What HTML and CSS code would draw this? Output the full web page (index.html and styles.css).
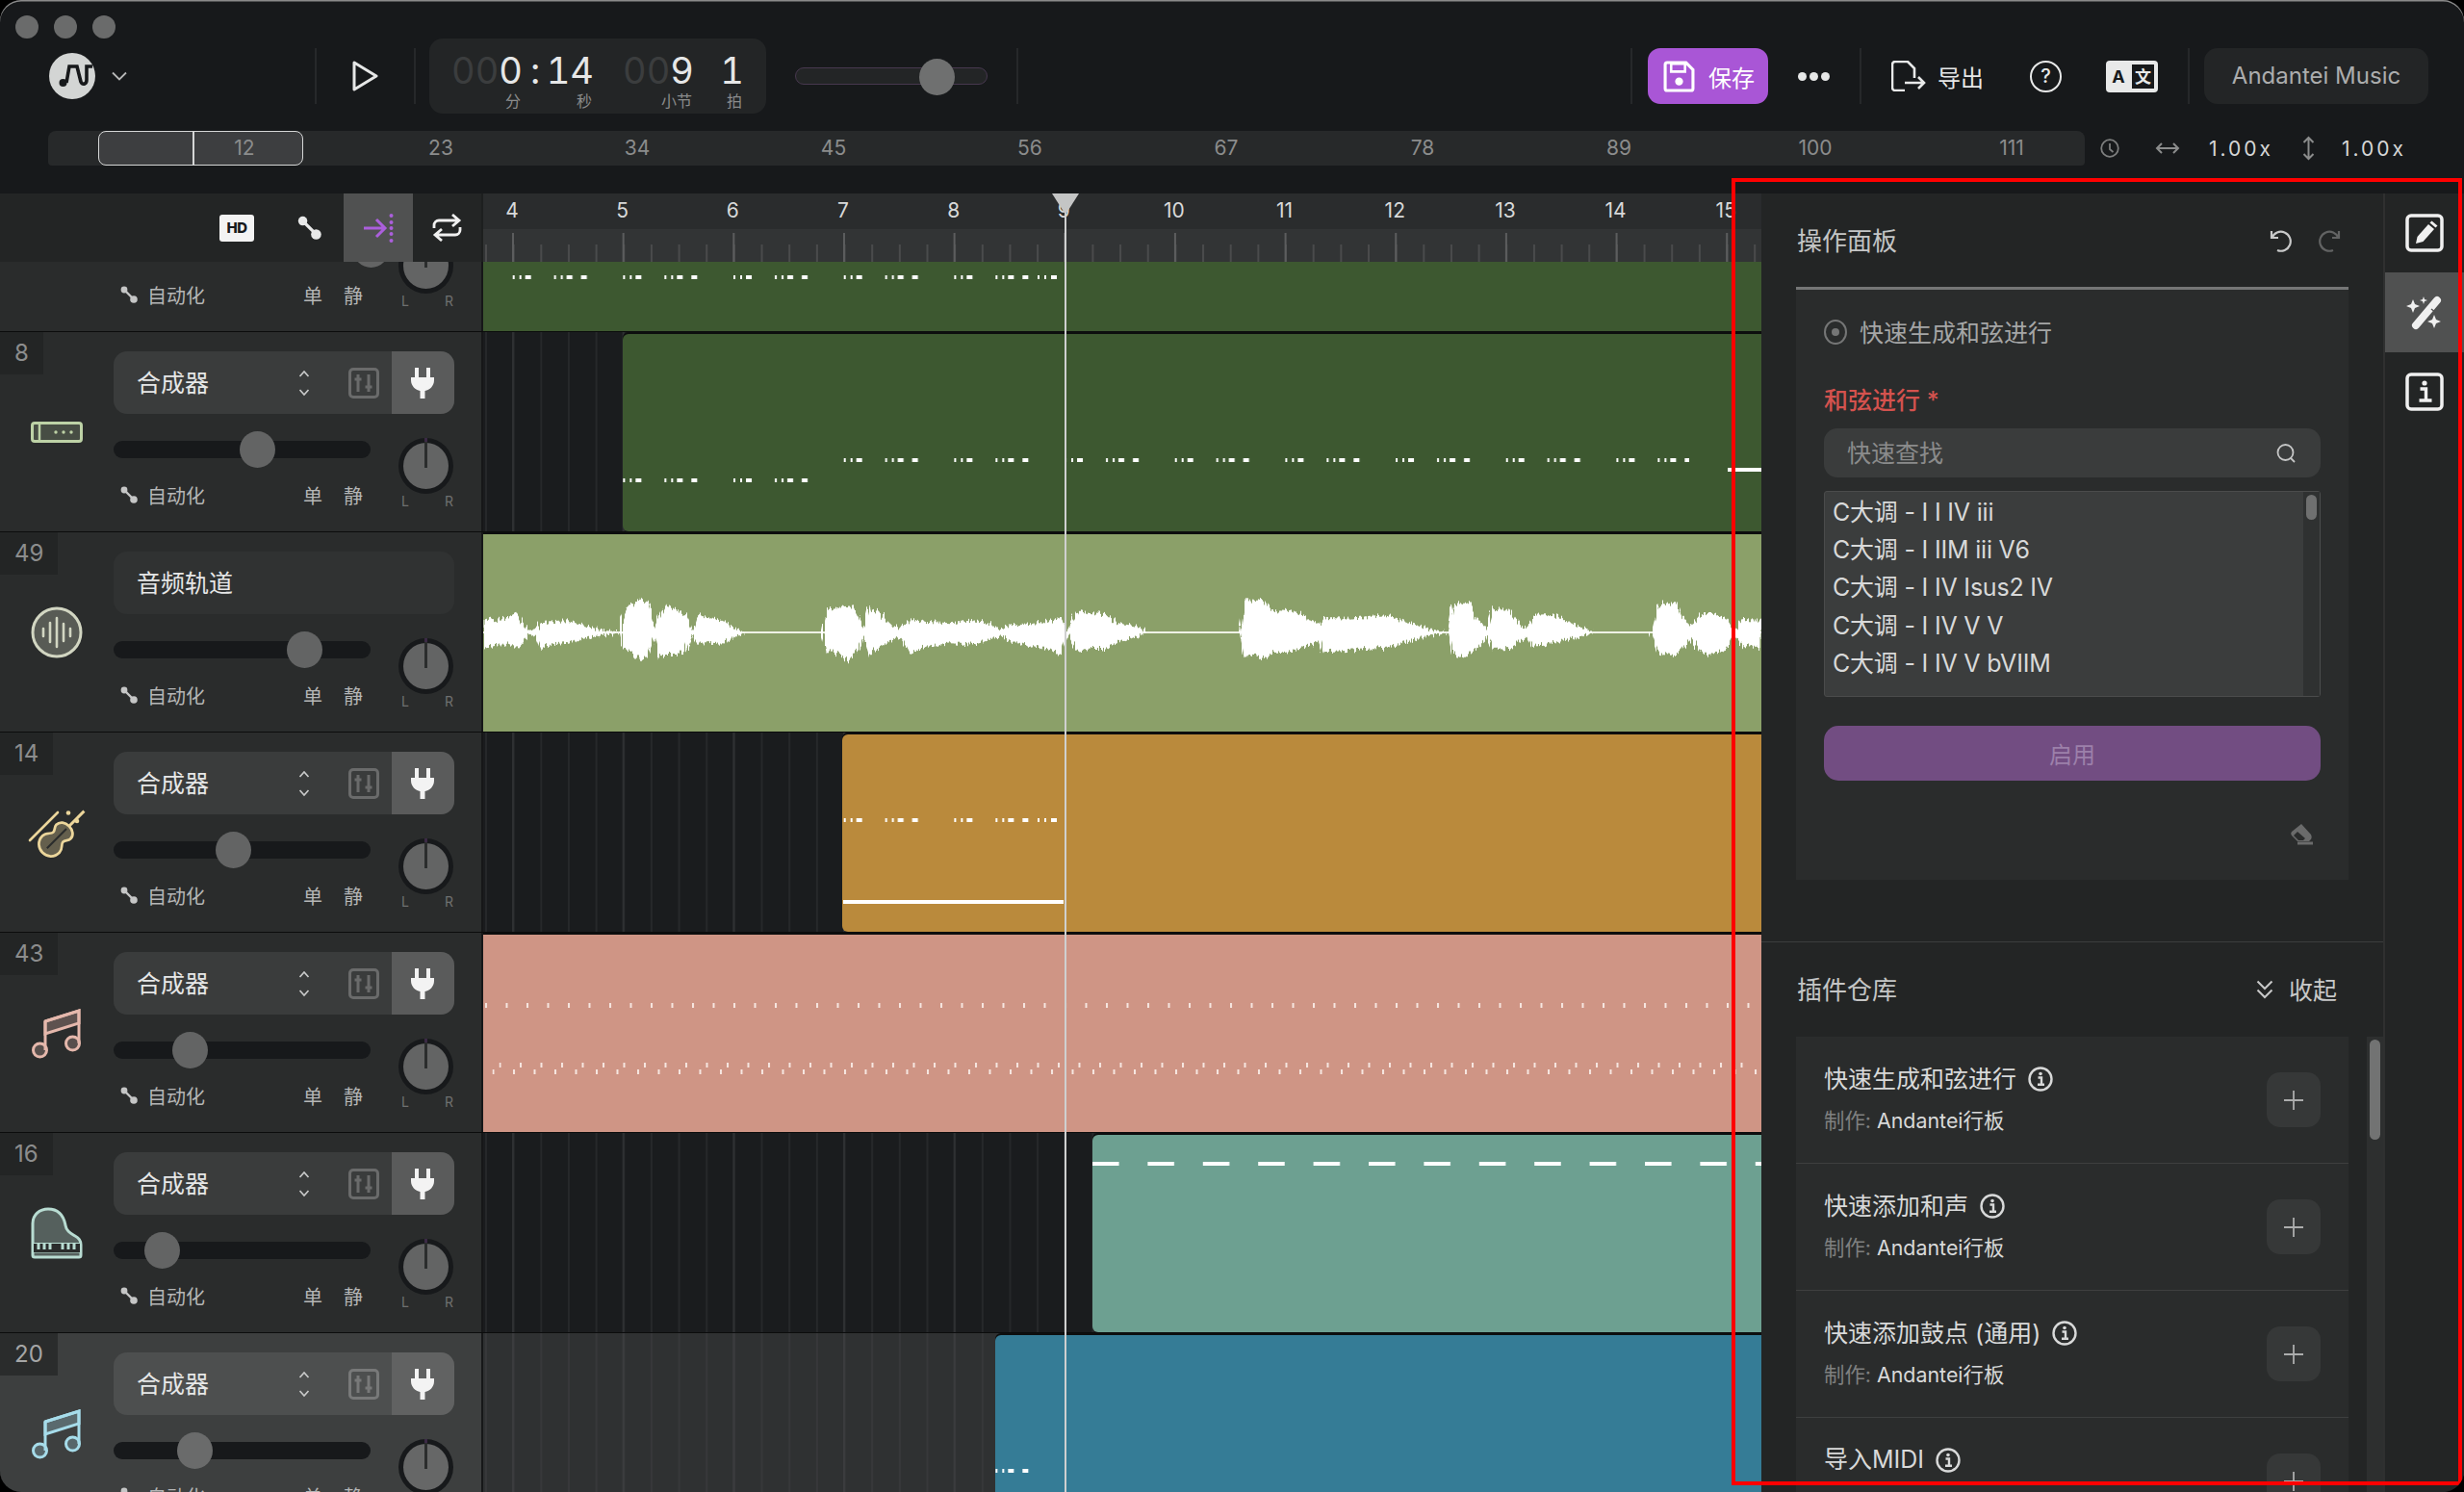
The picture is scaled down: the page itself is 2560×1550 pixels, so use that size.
FILE: index.html
```html
<!DOCTYPE html>
<html lang="zh">
<head>
<meta charset="utf-8">
<title>Andantei Music</title>
<link rel="stylesheet" href="styles.css">
</head>
<body>
<svg class="defs" width="0" height="0" aria-hidden="true">
  <defs>
    <filter id="jag" x="-2%" y="-10%" width="104%" height="120%">
      <feTurbulence type="fractalNoise" baseFrequency="0.45 0.015" numOctaves="2" seed="4" result="n"/>
      <feDisplacementMap in="SourceGraphic" in2="n" scale="12" xChannelSelector="A" yChannelSelector="R"/>
    </filter>
    <pattern id="bar" patternUnits="userSpaceOnUse" width="114.67" height="4" patternTransform="translate(30.7 0)">
      <rect x="0" width="2" height="4" fill="#fff"/><rect x="7" width="2" height="4" fill="#fff"/><rect x="13" width="6" height="4" fill="#fff"/>
      <rect x="43" width="2" height="4" fill="#fff"/><rect x="50" width="2" height="4" fill="#fff"/><rect x="56" width="6" height="4" fill="#fff"/><rect x="71" width="6" height="4" fill="#fff"/>
    </pattern>
    <pattern id="tick" patternUnits="userSpaceOnUse" width="21.5" height="5"><rect width="2" height="5" fill="#f6e6e0"/></pattern>
    <pattern id="dash" patternUnits="userSpaceOnUse" width="57.4" height="4"><rect width="27.5" height="4" fill="#fff"/></pattern>
    <symbol id="auto" viewBox="0 0 18 18"><path d="M4 4 14 14" stroke="currentColor" stroke-width="2.4"/><circle cx="4" cy="4" r="3.4" fill="currentColor"/><circle cx="14" cy="14" r="3.8" fill="currentColor"/></symbol>
    <symbol id="updown" viewBox="0 0 12 28"><path d="M1.5 7 6 2l4.500 5M1.500 21 6 26l4.500-5" fill="none" stroke="currentColor" stroke-width="1.700"/></symbol>
    <symbol id="mixer" viewBox="0 0 32 32"><rect x="1.500" y="1.500" width="29" height="29" rx="3.500" fill="none" stroke="currentColor" stroke-width="3"/><path d="M10 7v18M6.500 12h7M21 7v18M17.500 20h7" stroke="currentColor" stroke-width="3" fill="none"/></symbol>
    <symbol id="plug" viewBox="0 0 24 32"><path d="M4 0h4v10H4zM16 0h4v10h-4zM0 10h24v3c0 6-4.500 10-9.500 11v8h-5v-8C4.500 23 0 19 0 13z" fill="currentColor"/></symbol>
    <symbol id="note" viewBox="0 0 54 54"><path d="M15 15 50 4v34" fill="none" stroke="currentColor" stroke-width="3"/><path d="M15 15 50 4v13L15 28z" fill="currentColor" fill-opacity=".28" stroke="currentColor" stroke-width="3"/><path d="M15 15v30" stroke="currentColor" stroke-width="3"/><circle cx="9.500" cy="45" r="7" fill="currentColor" fill-opacity=".25" stroke="currentColor" stroke-width="3"/><circle cx="43.500" cy="38" r="7" fill="currentColor" fill-opacity=".25" stroke="currentColor" stroke-width="3"/></symbol>
    <symbol id="iinfo" viewBox="0 0 26 26"><circle cx="13" cy="13" r="11.500" fill="none" stroke="currentColor" stroke-width="2.400"/><circle cx="13" cy="7.500" r="1.800" fill="currentColor"/><path d="M10.500 11.500H14v7M10 18.800h7" fill="none" stroke="currentColor" stroke-width="2.400"/></symbol>
    <symbol id="plus" viewBox="0 0 20 20"><path d="M10 0v20M0 10h20" stroke="currentColor" stroke-width="1.800"/></symbol>
  </defs>
</svg>

<div class="window">
  <div class="titlebar"><i class="light"></i><i class="light"></i><i class="light"></i></div>

  <header class="toolbar">
    <svg class="logo" viewBox="0 0 48 48"><circle cx="24" cy="24" r="24" fill="#d3d5d4"/><path d="M18 31 21 14H29L33 30Q34.500 33 37 32Q39 31 39 28V14H45" fill="none" stroke="#17191b" stroke-width="3.600"/><circle cx="14.500" cy="31" r="4" fill="#17191b"/></svg>
    <svg class="chev" viewBox="0 0 16 10"><path d="M1 1.500 8 8.500 15 1.500" fill="none" stroke="#b5b6b6" stroke-width="1.800"/></svg>
    <i class="vr vr-a"></i>
    <svg class="play" viewBox="0 0 27 32"><path d="M2 2 25 16 2 30z" fill="none" stroke="#e6e7e7" stroke-width="3" stroke-linejoin="round"/></svg>
    <i class="vr vr-b"></i>
    <div class="timebox">
      <div class="tcol t-min"><div class="digits"><span class="dim">00</span>0</div><small>分</small></div>
      <div class="digits colon">:</div>
      <div class="tcol t-sec"><div class="digits">14</div><small>秒</small></div>
      <div class="tcol t-bar"><div class="digits"><span class="dim">00</span>9</div><small>小节</small></div>
      <div class="tcol t-beat"><div class="digits">1</div><small>拍</small></div>
    </div>
    <div class="master"><i class="master-thumb"></i></div>
    <i class="vr vr-c"></i>
    <i class="vr vr-d"></i>
    <button class="save">
      <svg class="save-ico" viewBox="0 0 32 32"><path d="M4 2h19l7 7v19a2 2 0 0 1-2 2H4a2 2 0 0 1-2-2V4a2 2 0 0 1 2-2z" fill="none" stroke="#fff" stroke-width="3"/><path d="M8 3h14v8H8z" fill="none" stroke="#fff" stroke-width="2.500"/><circle cx="16" cy="21" r="4" fill="#fff"/></svg>
      保存
    </button>
    <div class="dots"><i></i><i></i><i></i></div>
    <i class="vr vr-e"></i>
    <svg class="export-ico" viewBox="0 0 36 32"><path d="M14 31H4a3 3 0 0 1-3-3V4a3 3 0 0 1 3-3h13l7 7v10" fill="none" stroke="#e8e9e9" stroke-width="2.600"/><path d="M14 23h20M28 17l6 6-6 6" fill="none" stroke="#e8e9e9" stroke-width="2.600"/></svg>
    <span class="export-txt">导出</span>
    <span class="help">?</span>
    <svg class="translate" viewBox="0 0 54 33"><rect width="54" height="33" rx="4" fill="#e8e9e9"/><rect x="27" y="4" width="23" height="25" fill="#17191b"/><text x="13" y="23" class="tr-a">A</text><text x="38.500" y="23" class="tr-b">文</text></svg>
    <i class="vr vr-f"></i>
    <div class="account">Andantei Music</div>
  </header>

  <div class="overview-row">
    <div class="overview">
      <div class="viewport"><i></i></div>
      <div class="overview-labels"><span>12</span><span>23</span><span>34</span><span>45</span><span>56</span><span>67</span><span>78</span><span>89</span><span>100</span><span>111</span></div>
    </div>
    <svg class="ov-clock" viewBox="0 0 20 20"><circle cx="10" cy="10" r="8.800" fill="none" stroke="#7d7e7e" stroke-width="1.800"/><path d="M10 5v6l3.500 3" fill="none" stroke="#7d7e7e" stroke-width="1.800"/></svg>
    <svg class="ov-h" viewBox="0 0 26 14"><path d="M2 7h22M7 2 2 7l5 5M19 2l5 5-5 5" fill="none" stroke="#8b8c8c" stroke-width="2"/></svg>
    <span class="zoomval zv-a">1.00x</span>
    <svg class="ov-v" viewBox="0 0 13 26"><path d="M6.500 2v22M1.500 7l5-5 5 5M1.500 19l5 5 5-5" fill="none" stroke="#8b8c8c" stroke-width="2"/></svg>
    <span class="zoomval zv-b">1.00x</span>
  </div>

  <main class="main">
    <section class="arrange">
      <div class="arrange-head">
        <div class="tools">
          <div class="tool"><span class="hd">HD</span></div>
          <div class="tool"><svg class="ti-auto"><use href="#auto"/></svg></div>
          <div class="tool active"><svg class="ti-snap" viewBox="0 0 31 30"><path d="M0 15h21M13 6l9 9-9 9" fill="none" stroke="#ab5fdc" stroke-width="3"/><circle cx="28.500" cy="2" r="2" fill="#ab5fdc"/><circle cx="28.500" cy="9" r="2" fill="#ab5fdc"/><circle cx="28.500" cy="15" r="2" fill="#ab5fdc"/><circle cx="28.500" cy="21" r="2" fill="#ab5fdc"/><circle cx="28.500" cy="28" r="2" fill="#ab5fdc"/></svg></div>
          <div class="tool"><svg class="ti-loop" viewBox="0 0 31 29"><path d="M2 15V12a5 5 0 0 1 5-5h20M21 1l7 6-7 6M29 14v3a5 5 0 0 1-5 5H4M10 16l-7 6 7 6" fill="none" stroke="#f0f0f0" stroke-width="2.800"/></svg></div>
        </div>
        <div class="ruler">
          <div class="ruler-nums"><span>4</span><span>5</span><span>6</span><span>7</span><span>8</span><span>9</span><span>10</span><span>11</span><span>12</span><span>13</span><span>14</span><span>15</span></div>
          <div class="ruler-ticks"></div>
        </div>
      </div>

      <div class="tracks">
        <article class="track">
          <div class="tpanel">
            <div class="tleft"></div>
            <div class="tright">
              <div class="tgroup"></div>
              <div class="tlower">
                <div class="tcontrols"><div class="vol"><i class="thumb" style="left:248.500px"></i></div><div class="trow"><svg class="auto-ico"><use href="#auto"/></svg><span>自动化</span><b>单</b><b>静</b></div></div>
                <div class="pan"><div class="knob"><i></i></div><div class="lr"><span>L</span><span>R</span></div></div>
              </div>
            </div>
          </div>
          <div class="lane">
            <div class="clip full c-green" style="left:0"></div>
            <svg class="notes" style="top:149px"><rect width="568" height="4" fill="url(#bar)"/><rect x="576" width="2" height="4" fill="#fff"/><rect x="583" width="2" height="4" fill="#fff"/><rect x="590" width="6" height="4" fill="#fff"/></svg>
          </div>
        </article>

        <article class="track">
          <div class="tpanel">
            <div class="tleft"><span class="tnum">8</span>
              <div class="ticon ic-flute"><svg viewBox="0 0 54 22"><rect x="1.500" y="1.500" width="51" height="19" rx="2.500" fill="currentColor" fill-opacity=".2" stroke="currentColor" stroke-width="3"/><path d="M9 2v18" stroke="currentColor" stroke-width="2.500"/><circle cx="26" cy="11" r="1.700" fill="currentColor"/><circle cx="34" cy="11" r="1.700" fill="currentColor"/><circle cx="42" cy="11" r="1.700" fill="currentColor"/></svg></div>
            </div>
            <div class="tright">
              <div class="tgroup"><span class="tname">合成器</span><svg class="tud"><use href="#updown"/></svg><svg class="tmix"><use href="#mixer"/></svg><span class="tplug"><svg><use href="#plug"/></svg></span></div>
              <div class="tlower">
                <div class="tcontrols"><div class="vol"><i class="thumb" style="left:130.500px"></i></div><div class="trow"><svg class="auto-ico"><use href="#auto"/></svg><span>自动化</span><b>单</b><b>静</b></div></div>
                <div class="pan"><div class="knob"><i></i></div><div class="lr"><span>L</span><span>R</span></div></div>
              </div>
            </div>
          </div>
          <div class="lane">
            <div class="clip c-green" style="left:145px"></div>
            <svg class="notes" style="top:152px"><rect x="145" width="228" height="4" fill="url(#bar)"/></svg>
            <svg class="notes" style="top:131px"><rect x="373" width="880" height="4" fill="url(#bar)"/></svg>
            <i class="longnote" style="left:1293px;top:141px;width:35px"></i>
          </div>
        </article>

        <article class="track">
          <div class="tpanel">
            <div class="tleft"><span class="tnum">49</span>
              <div class="ticon ic-wave"><svg viewBox="0 0 54 54"><circle cx="27" cy="27" r="25" fill="currentColor" fill-opacity=".28" stroke="currentColor" stroke-width="3"/><path d="M13 23v8M20 17v20M27 12v30M34 18v18M41 23v8" stroke="currentColor" stroke-width="2.600" stroke-linecap="round"/></svg></div>
            </div>
            <div class="tright">
              <div class="tgroup tgroup-audio"><span class="tname">音频轨道</span></div>
              <div class="tlower">
                <div class="tcontrols"><div class="vol"><i class="thumb" style="left:180px"></i></div><div class="trow"><svg class="auto-ico"><use href="#auto"/></svg><span>自动化</span><b>单</b><b>静</b></div></div>
                <div class="pan"><div class="knob"><i></i></div><div class="lr"><span>L</span><span>R</span></div></div>
              </div>
            </div>
          </div>
          <div class="lane">
            <div class="clip full c-sage" style="left:0"></div>
            <i class="wave-line"></i>
            <svg class="wave" viewBox="25.500 141 1542 420" preserveAspectRatio="none"><polygon points="25,312 32,308 40,316 50,305 60,300 66,292 72,318 80,345 88,340 95,322 110,318 130,316 145,328 170,345 190,349 194,305 200,270 208,262 216,248 224,268 232,335 238,300 245,264 258,276 270,300 278,345 284,296 300,306 318,318 330,340 342,351 435,351 441,280 455,272 472,268 478,300 485,338 491,276 505,295 520,332 530,335 540,312 560,318 590,322 610,314 632,320 650,342 660,328 680,326 700,320 722,306 730,345 742,284 760,292 775,294 790,322 815,332 826,351 938,351 944,250 956,252 968,248 976,282 1000,285 1015,298 1035,328 1040,306 1070,308 1090,304 1115,298 1140,318 1160,335 1172,345 1190,351 1196,264 1205,262 1216,258 1226,310 1236,342 1243,276 1262,278 1270,310 1284,342 1292,296 1315,294 1340,325 1366,351 1435,351 1443,270 1455,260 1466,258 1472,300 1482,332 1495,292 1510,290 1525,305 1535,345 1545,312 1568,314 1568,396 1545,394 1535,358 1525,405 1510,418 1495,420 1482,372 1472,405 1466,420 1450,418 1443,412 1435,351 1366,351 1340,370 1315,385 1292,396 1284,360 1270,392 1262,402 1243,405 1236,362 1226,395 1212,428 1196,420 1190,351 1172,358 1160,366 1140,380 1115,398 1090,402 1070,408 1040,412 1035,372 1015,400 1000,408 976,415 968,432 956,422 944,425 938,351 826,351 815,365 790,380 775,402 760,402 742,410 730,358 722,418 700,398 680,390 660,378 650,360 632,378 610,388 590,385 560,395 540,418 530,368 520,372 505,395 491,420 485,366 478,400 465,442 455,415 441,412 435,351 342,351 330,362 318,382 300,384 284,386 278,356 270,412 258,420 245,420 238,428 232,368 224,420 216,442 208,420 200,408 194,400 190,351 170,360 145,372 130,380 110,385 95,408 88,362 80,355 72,385 66,402 60,385 50,392 40,390 32,398 25,402"/></svg>
          </div>
        </article>

        <article class="track">
          <div class="tpanel">
            <div class="tleft"><span class="tnum">14</span>
              <div class="ticon ic-violin"><svg viewBox="0 0 58 47"><path d="M1 31 30 2" stroke="currentColor" stroke-width="2.600" stroke-linecap="round"/><g transform="rotate(45 28 30) translate(28 30) scale(1.300) translate(-28 -30)"><path d="M28 15c4.500 0 8 2.500 8 6.500 0 2.500-2.500 3.500-2.500 6 0 2.500 4 3.500 4 8 0 6-4.500 9.500-9.500 9.500s-9.500-3.500-9.500-9.500c0-4.500 4-5.500 4-8 0-2.500-2.500-3.500-2.500-6 0-4 3.500-6.500 8-6.500z" fill="currentColor" fill-opacity=".3" stroke="currentColor" stroke-width="2.100"/><path d="M28 15V-2" stroke="currentColor" stroke-width="2.300"/><path d="M28 18v22" stroke="#2a2c2c" stroke-width="1.600"/></g><circle cx="41" cy="2.500" r="2.300" fill="currentColor"/><circle cx="50" cy="11" r="2.300" fill="currentColor"/></svg></div>
            </div>
            <div class="tright">
              <div class="tgroup"><span class="tname">合成器</span><svg class="tud"><use href="#updown"/></svg><svg class="tmix"><use href="#mixer"/></svg><span class="tplug"><svg><use href="#plug"/></svg></span></div>
              <div class="tlower">
                <div class="tcontrols"><div class="vol"><i class="thumb" style="left:105.500px"></i></div><div class="trow"><svg class="auto-ico"><use href="#auto"/></svg><span>自动化</span><b>单</b><b>静</b></div></div>
                <div class="pan"><div class="knob"><i></i></div><div class="lr"><span>L</span><span>R</span></div></div>
              </div>
            </div>
          </div>
          <div class="lane">
            <div class="clip c-amber" style="left:373px"></div>
            <svg class="notes" style="top:89px"><rect x="373" width="195" height="4" fill="url(#bar)"/><rect x="576" width="2" height="4" fill="#fff"/><rect x="583" width="2" height="4" fill="#fff"/><rect x="590" width="6" height="4" fill="#fff"/></svg>
            <i class="longnote" style="left:374px;top:174px;width:229px"></i>
          </div>
        </article>

        <article class="track">
          <div class="tpanel">
            <div class="tleft"><span class="tnum">43</span>
              <div class="ticon ic-salmon"><svg><use href="#note"/></svg></div>
            </div>
            <div class="tright">
              <div class="tgroup"><span class="tname">合成器</span><svg class="tud"><use href="#updown"/></svg><svg class="tmix"><use href="#mixer"/></svg><span class="tplug"><svg><use href="#plug"/></svg></span></div>
              <div class="tlower">
                <div class="tcontrols"><div class="vol"><i class="thumb" style="left:60.500px"></i></div><div class="trow"><svg class="auto-ico"><use href="#auto"/></svg><span>自动化</span><b>单</b><b>静</b></div></div>
                <div class="pan"><div class="knob"><i></i></div><div class="lr"><span>L</span><span>R</span></div></div>
              </div>
            </div>
          </div>
          <div class="lane">
            <div class="clip full c-salmon" style="left:0"></div>
            <svg class="notes notes-tall" style="top:73px"><g transform="translate(2 0)"><rect width="1328" height="5" fill="url(#tick)"/></g></svg>
            <svg class="notes notes-tall" style="top:135px"><g transform="translate(16.500 0)"><rect width="1328" height="5" fill="url(#tick)"/></g></svg>
            <svg class="notes notes-tall" style="top:142px"><g transform="translate(9.500 0)"><rect width="1328" height="5" fill="url(#tick)"/></g></svg>
          </div>
        </article>

        <article class="track">
          <div class="tpanel">
            <div class="tleft"><span class="tnum">16</span>
              <div class="ticon ic-piano"><svg viewBox="0 0 54 54"><path d="M2 50V17C2 8 9 2 18 2c10 0 16 6 18 17 1 6 5 8 10 11 4 2 6 5 6 9v11a2 2 0 0 1-2 2H4a2 2 0 0 1-2-2z" fill="currentColor" fill-opacity=".3" stroke="currentColor" stroke-width="3"/><path d="M3 38h48" stroke="currentColor" stroke-width="2"/><path d="M3 38h48v9H3z" fill="#2a2c2c"/><path d="M8 38v6M14 38v6M20 38v6M33 38v6M39 38v6M45 38v6" stroke="currentColor" stroke-width="3"/><path d="M3 47.500h48" stroke="currentColor" stroke-width="1" opacity=".5"/></svg></div>
            </div>
            <div class="tright">
              <div class="tgroup"><span class="tname">合成器</span><svg class="tud"><use href="#updown"/></svg><svg class="tmix"><use href="#mixer"/></svg><span class="tplug"><svg><use href="#plug"/></svg></span></div>
              <div class="tlower">
                <div class="tcontrols"><div class="vol"><i class="thumb" style="left:31.500px"></i></div><div class="trow"><svg class="auto-ico"><use href="#auto"/></svg><span>自动化</span><b>单</b><b>静</b></div></div>
                <div class="pan"><div class="knob"><i></i></div><div class="lr"><span>L</span><span>R</span></div></div>
              </div>
            </div>
          </div>
          <div class="lane">
            <div class="clip c-teal" style="left:633px"></div>
            <svg class="notes" style="top:30px"><g transform="translate(633 0)"><rect width="700" height="4" fill="url(#dash)"/></g></svg>
          </div>
        </article>

        <article class="track selected">
          <div class="tpanel">
            <div class="tleft"><span class="tnum">20</span>
              <div class="ticon ic-blue"><svg><use href="#note"/></svg></div>
            </div>
            <div class="tright">
              <div class="tgroup"><span class="tname">合成器</span><svg class="tud"><use href="#updown"/></svg><svg class="tmix"><use href="#mixer"/></svg><span class="tplug"><svg><use href="#plug"/></svg></span></div>
              <div class="tlower">
                <div class="tcontrols"><div class="vol"><i class="thumb" style="left:65.500px"></i></div><div class="trow"><svg class="auto-ico"><use href="#auto"/></svg><span>自动化</span><b>单</b><b>静</b></div></div>
                <div class="pan"><div class="knob"><i></i></div><div class="lr"><span>L</span><span>R</span></div></div>
              </div>
            </div>
          </div>
          <div class="lane">
            <div class="clip c-blue" style="left:532px"></div>
            <svg class="notes" style="top:141px"><rect x="532" width="64" height="4" fill="url(#bar)"/></svg>
          </div>
        </article>
      </div>

      <div class="playhead"></div>
    </section>

    <aside class="panel">
      <div class="panel-head">
        <h2>操作面板</h2>
        <svg class="undo" viewBox="0 0 24 24"><path d="M3 2v7h7M3.500 9A10 10 0 1 1 9 22" fill="none" stroke="#c8c9c9" stroke-width="2.200"/></svg>
        <svg class="redo" viewBox="0 0 24 24"><path d="M21 2v7h-7M20.500 9A10 10 0 1 0 15 22" fill="none" stroke="#626363" stroke-width="2.200"/></svg>
      </div>
      <div class="card">
        <div class="radio-row"><i class="radio"></i><span>快速生成和弦进行</span></div>
        <div class="field-label">和弦进行 <span>*</span></div>
        <div class="search"><span>快速查找</span><svg viewBox="0 0 21 20"><circle cx="9.500" cy="9" r="8" fill="none" stroke="#c5c6c6" stroke-width="1.800"/><path d="M15 15l4 4" stroke="#c5c6c6" stroke-width="1.800"/></svg></div>
        <div class="listbox">
          <ul>
            <li>C大调 - I I IV iii</li>
            <li>C大调 - I IIM iii V6</li>
            <li>C大调 - I IV Isus2 IV</li>
            <li>C大调 - I IV V V</li>
            <li>C大调 - I IV V bVIIM</li>
          </ul>
          <div class="list-scroll"><i></i></div>
        </div>
        <button class="apply">启用</button>
        <div class="eraser-row"><svg viewBox="0 0 25 22"><path d="M12 0 22 11a5 5 0 0 1-1 6l-1 1H8L2 12a3 3 0 0 1 0-4z" fill="#6a6b6b"/><path d="M8 8l-4 4 5 5h5l2-2z" fill="#2a2c2c"/><path d="M8 20h16" stroke="#6a6b6b" stroke-width="3"/></svg></div>
      </div>
      <div class="plugins-head">
        <h2>插件仓库</h2>
        <div class="collapse"><svg viewBox="0 0 18 20"><path d="M1.500 1.500 9 9l7.500-7.500M1.500 10.500 9 18l7.500-7.500" fill="none" stroke="#c8c9c9" stroke-width="2"/></svg><span>收起</span></div>
      </div>
      <div class="plugins-body">
        <div class="plugins">
          <div class="plugin"><div class="plugin-text"><div class="plugin-title">快速生成和弦进行<svg><use href="#iinfo"/></svg></div><div class="plugin-sub"><span>制作:</span> Andantei行板</div></div><button class="add"><svg><use href="#plus"/></svg></button></div>
          <div class="plugin"><div class="plugin-text"><div class="plugin-title">快速添加和声<svg><use href="#iinfo"/></svg></div><div class="plugin-sub"><span>制作:</span> Andantei行板</div></div><button class="add"><svg><use href="#plus"/></svg></button></div>
          <div class="plugin"><div class="plugin-text"><div class="plugin-title">快速添加鼓点 (通用)<svg><use href="#iinfo"/></svg></div><div class="plugin-sub"><span>制作:</span> Andantei行板</div></div><button class="add"><svg><use href="#plus"/></svg></button></div>
          <div class="plugin"><div class="plugin-text"><div class="plugin-title">导入MIDI<svg><use href="#iinfo"/></svg></div></div><button class="add"><svg><use href="#plus"/></svg></button></div>
        </div>
        <div class="plugins-scroll"><i></i></div>
      </div>
    </aside>

    <nav class="sidebar">
      <div class="side-item"><svg viewBox="0 0 40 40"><rect x="2" y="2" width="36" height="36" rx="4" fill="none" stroke="#f0f0f0" stroke-width="3.500"/><path d="M11 31l1.500-7L24 11l6 5-11.500 13z" fill="#f0f0f0"/><path d="M25.500 9.500l2-2 6 5-2 2z" fill="#f0f0f0"/></svg></div>
      <div class="side-item active"><svg viewBox="0 0 38 36"><path d="M10 31 32 5" stroke="#f0f0f0" stroke-width="8" stroke-linecap="round"/><path d="M26 14l5 4" stroke="#505151" stroke-width="1.500"/><path d="M7 4l2 5 5 2-5 2-2 5-2-5-5-2 5-2zM18 1l1 3 3 1-3 1-1 3-1-3-3-1 3-1zM29 20l2 5 5 2-5 2-2 5-2-5-5-2 5-2z" fill="#f0f0f0"/></svg></div>
      <div class="side-item"><svg viewBox="0 0 40 40"><rect x="2" y="2" width="36" height="36" rx="4" fill="none" stroke="#f0f0f0" stroke-width="3.500"/><circle cx="20" cy="11" r="2.600" fill="#f0f0f0"/><path d="M15.500 17H21.500V28M14.500 29h13" fill="none" stroke="#f0f0f0" stroke-width="3.400"/></svg></div>
    </nav>
  </main>

  <div class="annotation"></div>
</div>
</body>
</html>
```

FILE: styles.css
```css
* { box-sizing: border-box; }
html, body { margin: 0; height: 100%; background: #000; }
body { font-family: "Inter", "Noto Sans CJK SC", sans-serif; overflow: hidden; }
.defs { position: absolute; }
svg { display: block; flex: none; }
button { font: inherit; border: 0; padding: 0; }
h2 { margin: 0; font-weight: 400; }
ul { margin: 0; padding: 0; list-style: none; }
i { display: block; font-style: normal; }
small { font-size: inherit; }

.window {
  position: relative;
  width: 2560px;
  height: 1550px;
  background: #17191b;
  border-radius: 22px;
  overflow: hidden;
  display: flex;
  flex-direction: column;
  box-shadow: inset 0 1.5px 0 #8b8b8b;
}

/* title bar */
.titlebar { height: 50px; padding: 16px 0 0 16px; display: flex; gap: 16px; flex: none; }
.light { width: 24px; height: 24px; border-radius: 50%; background: #6a6b6b; }

/* toolbar */
.toolbar { height: 58px; flex: none; display: flex; align-items: center; padding: 0 37px 0 51px; }
.logo { width: 48px; height: 48px; }
.chev { width: 16px; height: 10px; margin-left: 17px; }
.vr { width: 2px; height: 58px; background: #26282a; flex: none; }
.vr-a { margin-left: 195px; }
.play { width: 27px; height: 32px; margin-left: 37px; }
.vr-b { margin-left: 37px; }
.timebox {
  width: 350px; height: 78px; margin-left: 14px; border-radius: 14px; background: #232526;
  display: flex; align-items: flex-start; padding: 10px 0 0 24px; color: #e6e7e7; position: relative;
}
.tcol { display: flex; flex-direction: column; align-items: flex-end; }
.digits { font-size: 38px; line-height: 46px; height: 46px; font-variant-numeric: tabular-nums; }
.digits .dim { color: #3b3d3e; }
.tcol small { font-size: 16px; line-height: 18px; color: #8a8b8b; margin-top: 0; padding-right: 2px; }
.colon { width: 26px; text-align: center; }
.t-min { width: 73px; }
.t-sec { width: 48px; }
.t-bar { width: 75px; margin-left: 29px; }
.t-beat { width: 18px; margin-left: 34px; }
.master {
  position: relative; width: 200px; height: 18px; margin-left: 30px; border-radius: 9px;
  background: #232526; border: 1px solid #47384f;
}
.master-thumb { position: absolute; left: 128px; top: -10px; width: 37px; height: 38px; border-radius: 50%; background: #6f7070; }
.vr-c { margin-left: 30px; }
.vr-d { margin-left: auto; }
.save {
  width: 125px; height: 58px; margin-left: 16px; border-radius: 13px; background: #a956d6; color: #fff;
  display: flex; align-items: center; font-size: 24px; gap: 14px; padding-left: 16px;
}
.save-ico { width: 33px; height: 33px; }
.dots { display: flex; gap: 3px; margin-left: 31px; }
.dots i { width: 9px; height: 9px; border-radius: 50%; background: #e6e7e7; }
.vr-e { margin-left: 31px; }
.export-ico { width: 36px; height: 32px; margin-left: 31px; }
.export-txt { margin-left: 12px; font-size: 24px; color: #e6e7e7; }
.help {
  width: 33px; height: 33px; margin-left: 48px; border: 2.500px solid #e8e9e9; border-radius: 50%;
  color: #e8e9e9; font-size: 20px; font-weight: 500; line-height: 28px; text-align: center;
}
.translate { width: 54px; height: 33px; margin-left: 46px; }
.tr-a { font-size: 18px; font-weight: 700; fill: #17191b; text-anchor: middle; }
.tr-b { font-size: 17px; font-weight: 700; fill: #e8e9e9; text-anchor: middle; }
.vr-f { margin-left: 31px; }
.account {
  width: 233px; height: 58px; margin-left: 15px; border-radius: 14px; background: #232526;
  color: #acadad; font-size: 24px; line-height: 58px; text-align: center;
}

/* overview */
.overview-row { height: 36px; margin-top: 28px; padding-left: 50px; display: flex; align-items: center; flex: none; }
.overview { position: relative; width: 2116px; height: 36px; background: #27292a; border-radius: 8px 8px 4px 4px; flex: none; }
.viewport {
  position: absolute; left: 52px; top: 0; width: 213px; height: 36px; border: 1.500px solid #d5d6d6;
  border-radius: 8px; background: #3d3e40;
}
.viewport i { position: absolute; left: 97px; top: 0; bottom: 0; width: 1.500px; background: #d5d6d6; }
.overview-labels { position: absolute; inset: 0 0 0 102px; display: flex; }
.overview-labels span { width: 204px; flex: none; text-align: center; font-size: 21px; line-height: 36px; color: #8b8c8c; }
.ov-clock { width: 20px; height: 20px; margin-left: 16px; }
.ov-h { width: 26px; height: 14px; margin-left: 37px; }
.zoomval { font-size: 21px; letter-spacing: 3px; color: #d5d6d6; width: 66px; white-space: nowrap; flex: none; }
.zv-a { margin-left: 30px; }
.ov-v { width: 13px; height: 26px; margin-left: 31px; }
.zv-b { margin-left: 28px; }

/* main */
.main { flex: 1; min-height: 0; margin-top: 29px; display: flex; }
.arrange { position: relative; width: 1830px; flex: none; display: flex; flex-direction: column; }
.arrange-head { height: 71px; flex: none; display: flex; position: relative; z-index: 2; }
.tools { width: 502px; flex: none; background: #232525; border-right: 2px solid #1d1f1f; display: flex; justify-content: flex-end; }
.tool { width: 72px; display: flex; align-items: center; justify-content: center; }
.tool:last-child { width: 71px; }
.tool.active { background: #505151; }
.hd {
  width: 36px; height: 28px; border-radius: 3px; background: #f3f3f3; color: #17191b;
  font-size: 15px; font-weight: 800; line-height: 28px; text-align: center; margin-right: 6px; letter-spacing: -.5px;
}
.ti-auto { width: 25px; height: 27px; color: #e8e9e9; }
.ti-snap { width: 31px; height: 30px; }
.ti-loop { width: 31px; height: 29px; }
.ruler { flex: 1; min-width: 0; overflow: hidden; display: flex; flex-direction: column; }
.ruler-nums { height: 37px; background: #2a2c2d; display: flex; }
.ruler-nums span { width: 114.670px; flex: none; font-size: 21px; line-height: 35px; color: #d8d9d9; text-align: center; }
.ruler-nums span:first-child { margin-left: -27.300px; }
.ruler-ticks {
  height: 34px;
  background-color: #323435;
  background-image:
    linear-gradient(90deg, #5c5d5e 0 2px, transparent 2px),
    linear-gradient(90deg, #4a4b4c 0 2px, transparent 2px);
  background-size: 114.670px 30px, 28.667px 18px;
  background-position: 30px bottom, 2px bottom;
  background-repeat: repeat-x;
}

/* tracks */
.tracks { flex: 1; min-height: 0; overflow: hidden; }
.track { height: 208px; display: flex; border-bottom: 1px solid #0b0c0c; }
.track:first-child { margin-top: -135px; }
.tpanel { width: 502px; flex: none; display: flex; background: #2a2c2c; border-right: 2px solid #161718; padding-right: 28px; }
.tleft { width: 118px; flex: none; }
.tnum {
  display: inline-block; height: 44px; padding: 0 15px; background: #232525; color: #8c8d8d;
  font-size: 24px; line-height: 44px; vertical-align: top;
}
.ticon { width: 54px; height: 60px; margin: 30px 0 0 32px; display: flex; align-items: center; justify-content: center; }
.ticon svg { width: 54px; height: 54px; }
.ic-flute { color: #bdd2a6; }
.ic-flute svg { height: 22px; }
.ic-wave { color: #d2d6c2; }
.ic-violin { color: #ecd69b; }
.ic-violin svg { width: 58px; height: 47px; overflow: visible; }
.ic-salmon { color: #e5b8ac; }
.ic-piano { color: #b8dcd2; }
.ic-blue { color: #a6dcea; }
.tright { flex: 1; padding-top: 20px; }
.tgroup { height: 65px; border-radius: 14px; background: #3a3c3c; display: flex; align-items: center; overflow: hidden; color: #e6e7e7; }
.tgroup-audio { background: #303232; }
.tname { font-size: 25px; margin-left: 24px; width: 168px; white-space: nowrap; padding-bottom: 3px; }
.tud { width: 12px; height: 28px; color: #c8c9c9; margin-right: 40px; }
.tmix { width: 32px; height: 32px; color: #6a6b6b; }
.tplug { margin-left: auto; width: 65px; height: 100%; background: #5a5b5b; color: #f3f3f3; display: flex; align-items: center; padding-left: 20px; }
.tplug svg { width: 24px; height: 32px; }
.tlower { display: flex; }
.tcontrols { width: 267px; flex: none; }
.vol { position: relative; height: 18px; margin-top: 28px; border-radius: 9px; background: #17191b; }
.thumb { position: absolute; top: -10px; width: 37px; height: 38px; border-radius: 50%; background: #636464; }
.trow { margin-top: 24px; height: 28px; display: flex; align-items: center; color: #b5b6b6; font-size: 20px; padding-left: 7px; }
.trow span { margin-left: 10px; }
.trow b { font-weight: 400; margin-left: 22px; }
.trow span + b { margin-left: auto; }
.trow b:last-child { margin-right: 8px; }
.auto-ico { width: 18px; height: 18px; color: #c5c6c6; }
.pan { width: 57px; margin-left: 29px; }
.knob { position: relative; width: 57px; height: 58px; margin-top: 25px; border-radius: 50%; background: #17191b; }
.knob::before { content: ""; position: absolute; inset: 5px; border-radius: 50%; background: #636464; }
.knob i { position: absolute; left: 27px; top: 0; width: 3px; height: 31px; background: #2b2d2d; border-top: 4px solid #3b2a45; }
.lr { display: flex; justify-content: space-between; padding: 0 0 0 3px; font-size: 14px; line-height: 16px; color: #6f7070; }

.lane {
  position: relative; flex: 1; overflow: hidden;
  background-color: #1a1c1e;
  background-image:
    linear-gradient(90deg, #2e3032 0 2px, transparent 2px),
    linear-gradient(90deg, #26282a 0 2px, transparent 2px);
  background-size: 114.670px 100%, 28.667px 100%;
  background-position: 30px 0, 2px 0;
}
.clip { position: absolute; right: 0; top: 2px; bottom: 0; border-radius: 6px 0 0 6px; box-shadow: 0 -2px 0 #0d0e0e; }
.clip.full { border-radius: 0; }
.c-green { background: #3d5830; }
.c-sage { background: #8ba069; }
.c-amber { background: #ba8a3c; }
.c-salmon { background: #cf9585; }
.c-teal { background: #6da091; }
.c-blue { background: #357c96; }
.notes { position: absolute; left: 0; width: 1328px; height: 4px; }
.notes-tall { height: 5px; }
.longnote { position: absolute; height: 4px; background: #fff; }
.wave-line { position: absolute; left: 0; right: 0; top: 103px; height: 2px; background: #eef1e4; }
.wave { position: absolute; left: 0; top: 34px; width: 1328px; height: 140px; filter: url(#jag); overflow: visible; }
.wave polygon { fill: #fff; }

.selected .tpanel { background: #3d3f3f; }
.selected .tnum { background: #2a2c2c; color: #a5a6a6; }
.selected .tgroup { background: #4d4f4f; }
.selected .tplug { background: #616262; }
.selected .tmix { color: #787979; }
.selected .thumb { background: #6a6b6b; }
.selected .knob::before { background: #666767; }
.selected .lane {
  background-color: #2f3132;
  background-image:
    linear-gradient(90deg, #3b3c3e 0 2px, transparent 2px),
    linear-gradient(90deg, #37383a 0 2px, transparent 2px);
}

.playhead { position: absolute; left: 1106px; top: 0; bottom: 0; width: 2px; background: #cfd0d0; z-index: 3; }
.playhead::before {
  content: ""; position: absolute; left: -13px; top: 0; width: 28px; height: 22px;
  background: #c4c5c5; clip-path: polygon(0 0, 100% 0, 50% 100%);
}

/* panel */
.panel { width: 646px; flex: none; background: #232525; display: flex; flex-direction: column; overflow: hidden; }
.panel h2 { font-size: 26px; color: #c4c5c5; }
.panel-head { height: 97px; flex: none; display: flex; align-items: center; padding: 0 0 0 37px; }
.panel-head h2 { margin-right: auto; padding-bottom: 3px; }
.undo { width: 24px; height: 24px; margin-right: 28px; }
.redo { width: 24px; height: 24px; margin-right: 43px; }
.card { margin: 0 36px; width: 574px; flex: none; background: #2a2c2c; border-top: 3px solid #757676; padding: 31px 29px 36px; }
.radio-row { display: flex; align-items: center; height: 26px; gap: 13px; font-size: 25px; color: #a5a6a6; }
.radio-row span { margin-top: -3px; }
.radio { width: 24px; height: 26px; border-radius: 50%; border: 2px solid #757676; position: relative; }
.radio::after { content: ""; position: absolute; inset: 7px 6px; border-radius: 50%; background: #757676; }
.field-label { margin-top: 43px; height: 30px; line-height: 30px; font-size: 25px; font-weight: 500; color: #d4524e; }
.search {
  margin-top: 14px; height: 51px; border-radius: 14px; background: #3a3c3c; display: flex; align-items: center;
  justify-content: space-between; padding: 0 25px 0 24px; font-size: 25px; color: #8a8b8b;
}
.search span { margin-top: -3px; }
.search svg { width: 21px; height: 20px; }
.listbox { margin-top: 14px; height: 214px; display: flex; background: #3b3d3d; border: 1.500px solid #4b4c4c; border-radius: 3px; font-size: 25px; color: #d8d9d9; }
.listbox ul { flex: 1; padding: 2px 0 0 8px; overflow: hidden; }
.listbox li { height: 39.200px; line-height: 39px; white-space: nowrap; letter-spacing: -.2px; }
.list-scroll { width: 17px; background: #2f3131; padding: 3px; }
.list-scroll i { width: 11px; height: 26px; border-radius: 6px; background: #6f7070; }
.apply { display: block; width: 100%; margin-top: 30px; height: 57px; border-radius: 15px; background: #724d82; color: #9c80aa; font-size: 24px; }
.eraser-row { margin-top: 45px; display: flex; justify-content: flex-end; padding-right: 7px; }
.eraser-row svg { width: 25px; height: 22px; }
.plugins-head {
  margin-top: 64px; height: 99px; flex: none; border-top: 1px solid #3c3d3d; display: flex; align-items: center;
  justify-content: space-between; padding: 0 48px 0 37px;
}
.plugins-head h2 { padding-bottom: 3px; }
.collapse { display: flex; align-items: center; gap: 16px; font-size: 25px; color: #c8c9c9; }
.collapse span { margin-top: -3px; }
.collapse svg { width: 18px; height: 20px; }
.plugins-body { flex: 1; min-height: 0; display: flex; overflow: hidden; }
.plugins { width: 574px; margin-left: 36px; background: #2a2c2c; flex: none; }
.plugin { height: 132px; display: flex; align-items: center; justify-content: space-between; padding: 0 29px; border-bottom: 1.500px solid #3e3f3f; }
.plugin-title { display: flex; align-items: center; gap: 12px; font-size: 25px; line-height: 30px; color: #d8d9d9; }
.plugin-title svg { width: 26px; height: 26px; color: #d8d9d9; margin-top: 1px; }
.plugin-sub { margin-top: 14px; font-size: 21.400px; line-height: 28px; color: #d8d9d9; }
.plugin-sub span { color: #7f8080; }
.plugin-text { margin-top: -2px; }
.plugin:last-child .plugin-text { align-self: flex-start; margin-top: 28px; }
.add { width: 56px; height: 57px; border-radius: 14px; background: #363838; color: #acadad; display: flex; align-items: center; justify-content: center; }
.add svg { width: 20px; height: 20px; }
.plugins-scroll { width: 17px; margin-left: 19px; background: #2d2f2f; padding: 3px; }
.plugins-scroll i { width: 11px; height: 104px; border-radius: 6px; background: #727373; }

/* sidebar */
.sidebar { width: 84px; flex: none; background: #232525; border-left: 2px solid #2f3030; }
.side-item { height: 82px; display: flex; align-items: center; justify-content: center; }
.side-item svg { width: 40px; height: 40px; }
.side-item.active { height: 83px; background: #505151; }
.side-item.active svg { width: 38px; height: 36px; }

.annotation { position: absolute; left: 1799px; top: 185px; width: 759px; height: 1358px; border: 4px solid #f00; pointer-events: none; z-index: 5; }
```
